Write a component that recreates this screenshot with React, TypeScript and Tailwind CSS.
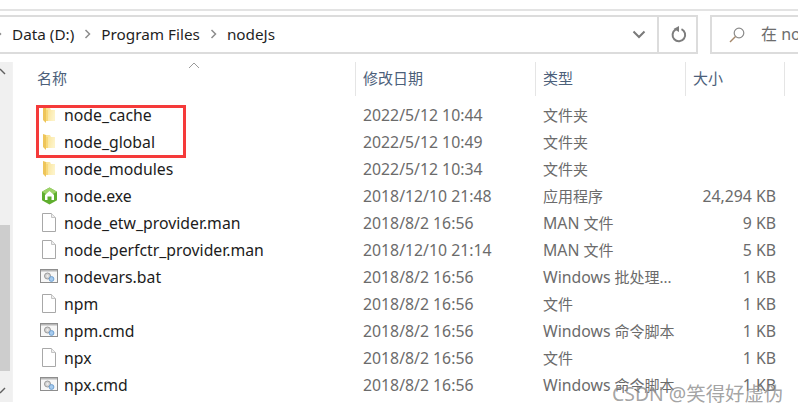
import React from "react";

const Folder = () => (
  <svg width="14" height="18" viewBox="0 0 14 18" className="block">
    <defs>
      <linearGradient id="fg" x1="0" y1="0" x2="1" y2="0.3">
        <stop offset="0" stopColor="#f9e08f" />
        <stop offset="1" stopColor="#fdf3c8" />
      </linearGradient>
    </defs>
    <path d="M4 2 H8 L9 4 H13 V15 H4 Z" fill="url(#fg)" />
    <path d="M1 1 L4 2 V17 L1 14 Z" fill="#eec55a" />
    <path d="M4 4 H6 V15 H4 Z" fill="#f8d97a" />
  </svg>
);

const Exe = () => (
  <svg width="17" height="18" viewBox="0 0 17 18" className="block">
    <path d="M8.5 0.5 L16 4.8 V13.2 L8.5 17.5 L1 13.2 V4.8 Z" fill="#5fae2e" />
    <path d="M8.5 0.5 L16 4.8 L8.5 9 L1 4.8 Z" fill="#9ed36a" />
    <path d="M8.5 4 L13 8 V13 H10.5 V9.5 H6.5 V13 H4 V8 Z" fill="#fff" />
  </svg>
);

const Doc = () => (
  <svg width="14" height="19" viewBox="0 0 14 19" className="block">
    <path d="M0.5 0.5 H9.5 L13.5 4.5 V18.5 H0.5 Z" fill="#fff" stroke="#a8a8a8" />
    <path d="M9.5 0.5 V4.5 H13.5" fill="#eee" stroke="#c4c4c4" />
  </svg>
);

const Bat = () => (
  <svg width="18" height="15" viewBox="0 0 18 15" className="block">
    <rect x="0.5" y="0.5" width="17" height="13" fill="#f7f7f7" stroke="#8e8e8e" />
    <rect x="1" y="1" width="16" height="1.5" fill="#b8b8b8" />
    <circle cx="7.5" cy="7" r="3" fill="#d4d4d4" stroke="#9a9a9a" />
    <circle cx="7.5" cy="7" r="1" fill="#f0f0f0" />
    <circle cx="11.5" cy="10" r="2.4" fill="#a6cbee" stroke="#6e9fd0" />
  </svg>
);

const Chevron = () => (
  <svg width="7" height="10" viewBox="0 0 7 10" className="block">
    <path d="M1.5 1 L5.5 5 L1.5 9" fill="none" stroke="#8c8c8c" strokeWidth="1.5" />
  </svg>
);

type Row = { name: string; icon: React.ReactNode; date: string; prefix?: string; type: string; size: string };

const rows: Row[] = [
  { name: "node_cache", icon: <Folder />, date: "2022/5/12 10:44", type: "文件夹", size: "" },
  { name: "node_global", icon: <Folder />, date: "2022/5/12 10:49", type: "文件夹", size: "" },
  { name: "node_modules", icon: <Folder />, date: "2022/5/12 10:34", type: "文件夹", size: "" },
  { name: "node.exe", icon: <Exe />, date: "2018/12/10 21:48", type: "应用程序", size: "24,294 KB" },
  { name: "node_etw_provider.man", icon: <Doc />, date: "2018/8/2 16:56", prefix: "MAN ", type: "文件", size: "9 KB" },
  { name: "node_perfctr_provider.man", icon: <Doc />, date: "2018/12/10 21:14", prefix: "MAN ", type: "文件", size: "5 KB" },
  { name: "nodevars.bat", icon: <Bat />, date: "2018/8/2 16:56", prefix: "Windows ", type: "批处理...", size: "1 KB" },
  { name: "npm", icon: <Doc />, date: "2018/8/2 16:56", type: "文件", size: "1 KB" },
  { name: "npm.cmd", icon: <Bat />, date: "2018/8/2 16:56", prefix: "Windows ", type: "命令脚本", size: "1 KB" },
  { name: "npx", icon: <Doc />, date: "2018/8/2 16:56", type: "文件", size: "1 KB" },
  { name: "npx.cmd", icon: <Bat />, date: "2018/8/2 16:56", prefix: "Windows ", type: "命令脚本", size: "1 KB" },
];

export default function App() {
  return (
    <div className="relative w-[798px] h-[413px] overflow-hidden bg-white text-[15.8px] leading-[20px] [font-family:'Noto_Sans','Noto_Sans_CJK_SC',sans-serif]">
      <div className="h-[9px]" />
      <div className="h-[2px] bg-[#e3e3e3]" />
      <div className="h-[4px]" />

      {/* address row */}
      <div className="flex h-[39px] items-stretch">
        <div className="flex w-[698px] shrink-0 items-stretch border-y-2 border-r-2 border-[#dcdcdc]">
          <div className="flex flex-1 items-center pb-[2px] text-[15.3px] text-[#1f1f1f]">
            <span className="-ml-[5px] mr-[10px]"><Chevron /></span>
            <span>Data (D:)</span>
            <span className="ml-[10px] mr-[10px]"><Chevron /></span>
            <span>Program Files</span>
            <span className="ml-[10px] mr-[10px]"><Chevron /></span>
            <span>nodeJs</span>
          </div>
          <div className="flex w-[39px] items-center pl-[14px]">
            <svg width="14" height="9" viewBox="0 0 14 9" className="block">
              <path d="M1.5 1.5 L7 7 L12.5 1.5" fill="none" stroke="#7a7a7a" strokeWidth="2" />
            </svg>
          </div>
          <div className="flex w-[39px] items-center justify-center border-l-2 border-[#dcdcdc] pl-[3px]">
            <svg width="16" height="17" viewBox="0 0 16 17" className="block">
              <path d="M10.5 3.2 A6.3 6.3 0 1 1 4.5 3.6" fill="none" stroke="#7d7d7d" strokeWidth="2" />
              <path d="M9 0 V6 L3.5 3 Z" fill="#7d7d7d" transform="translate(-1 0)" />
            </svg>
          </div>
        </div>
        <div className="ml-[12px] flex flex-1 items-center border-y-2 border-l-2 border-[#dcdcdc] pl-[17px] text-[#6d6d6d] whitespace-nowrap">
          <svg width="16" height="16" viewBox="0 0 16 16" className="block mr-[16px] shrink-0">
            <circle cx="10" cy="6" r="4.8" fill="none" stroke="#8a8a8a" strokeWidth="1.2" />
            <path d="M6.5 9.5 L1 15" stroke="#a5876a" strokeWidth="1.4" />
          </svg>
          <span className="text-[16px] pb-[1px]">在 no</span>
        </div>
      </div>

      {/* content */}
      <div className="mt-[8px] flex h-[340px]">
        <div className="flex w-[12px] flex-col bg-[#f0f0f0]">
          <svg width="6" height="8" viewBox="0 0 6 8" className="block mt-[6px]">
            <path d="M0 1 L5 6" stroke="#606060" strokeWidth="1.5" />
          </svg>
          <div className="mt-[149px] h-[146px] w-[10px] bg-[#cdcdcd]" />
          <svg width="6" height="8" viewBox="0 0 6 8" className="block mt-[16px]">
            <path d="M0 6 L5 1" stroke="#606060" strokeWidth="1.5" />
          </svg>
        </div>
        <div className="relative flex-1 border-l border-[#f2f2f2]">
          {/* header */}
          <div className="relative grid h-[32px] grid-cols-[342px_180px_150px_100px] items-center pb-[2px] text-[15px] text-[#4c607a]">
            <span className="pl-[24px]">名称</span>
            <span className="h-[34px] -mb-[2px] flex items-center border-l border-[#e5e5e5] pl-[7px] pb-[2px]">修改日期</span>
            <span className="h-[34px] -mb-[2px] flex items-center border-l border-[#e5e5e5] pl-[7px] pb-[2px]">类型</span>
            <span className="h-[34px] -mb-[2px] flex items-center border-x border-[#e5e5e5] pl-[7px] pb-[2px]">大小</span>
            <svg width="12" height="7" viewBox="0 0 12 7" className="absolute left-[175px] top-0">
              <path d="M1 6 L6 1 L11 6" fill="none" stroke="#9a9a9a" />
            </svg>
          </div>

          {/* rows */}
          <div className="relative mt-[7px]">
            {rows.map((r) => (
              <div key={r.name} className="grid h-[27px] grid-cols-[342px_180px_150px_100px] items-center whitespace-nowrap">
                <div className="flex items-center">
                  <span className="flex w-[51px] justify-end pr-[6px]"><span className="flex w-[18px] justify-center">{r.icon}</span></span>
                  <span className="text-[#1c1c1c]">{r.name}</span>
                </div>
                <span className="pl-[8px] text-[#6b6b6b]">{r.date}</span>
                <span className="pl-[8px] text-[#6b6b6b]">
                  {r.prefix}
                  <span className="text-[15px]">{r.type}</span>
                </span>
                <span className="pr-[9px] text-right text-[#6b6b6b]">{r.size}</span>
              </div>
            ))}
            <div className="absolute left-[23px] top-[4px] h-[53px] w-[150px] border-[3px] border-[#f53a3a]" />
          </div>
        </div>
      </div>

      {/* watermark */}
      <div className="absolute left-[612px] top-[382px] text-[19.4px] leading-[24px] text-[#8c8c8c]/80 whitespace-nowrap">
        CSDN @笑得好虚伪
      </div>
    </div>
  );
}
